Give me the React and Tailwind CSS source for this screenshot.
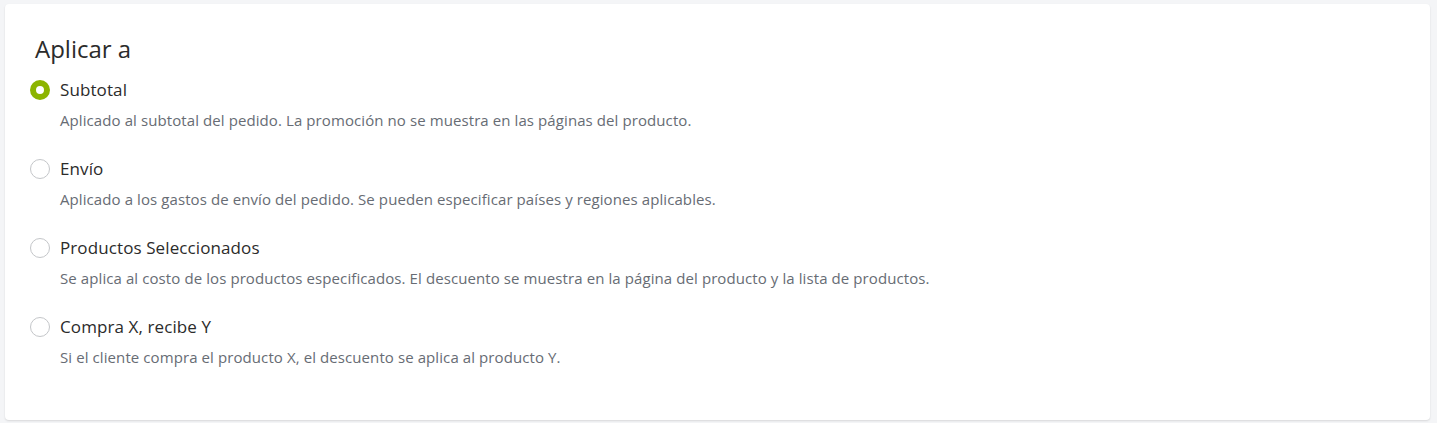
import React, { useState } from 'react';

const options = [
  {
    id: 'subtotal',
    label: 'Subtotal',
    desc: 'Aplicado al subtotal del pedido. La promoción no se muestra en las páginas del producto.',
  },
  {
    id: 'envio',
    label: 'Envío',
    desc: 'Aplicado a los gastos de envío del pedido. Se pueden especificar países y regiones aplicables.',
  },
  {
    id: 'productos',
    label: 'Productos Seleccionados',
    desc: 'Se aplica al costo de los productos especificados. El descuento se muestra en la página del producto y la lista de productos.',
  },
  {
    id: 'xy',
    label: 'Compra X, recibe Y',
    desc: 'Si el cliente compra el producto X, el descuento se aplica al producto Y.',
  },
];

const App = () => {
  const [selected, setSelected] = useState('subtotal');

  return (
    <div className="min-h-screen bg-[#f4f5f7] pt-[4px] pl-[5px] pr-[7px] font-['Open_Sans',sans-serif]">
      <div className="bg-white rounded-[4px] shadow-[0_1px_2px_rgba(0,0,0,0.12)] h-[416px] pl-[25px] pt-[30px]">
        <h2 className="text-[24px] leading-[30px] text-[#2b2b2b] pl-[5px] mb-[14px]">Aplicar a</h2>
        <div className="flex flex-col">
          {options.map((opt) => {
            const active = selected === opt.id;
            return (
              <label
                key={opt.id}
                className="flex flex-col cursor-pointer h-[79px]"
                onClick={() => setSelected(opt.id)}
              >
                <div className="flex items-center h-[24px]">
                  {active ? (
                    <span className="w-[20px] h-[20px] rounded-full border-[6px] border-[#8cb400] bg-white shrink-0" />
                  ) : (
                    <span className="w-[20px] h-[20px] rounded-full border border-[#c4c6c9] bg-white shrink-0" />
                  )}
                  <span className="ml-[10px] text-[17px] tracking-[0.1px] text-[#2b2b2b]">{opt.label}</span>
                </div>
                <p className="ml-[30px] mt-[7px] text-[15px] leading-[22px] tracking-[0.09px] text-[#676c74]">{opt.desc}</p>
              </label>
            );
          })}
        </div>
      </div>
    </div>
  );
};

export default App;
